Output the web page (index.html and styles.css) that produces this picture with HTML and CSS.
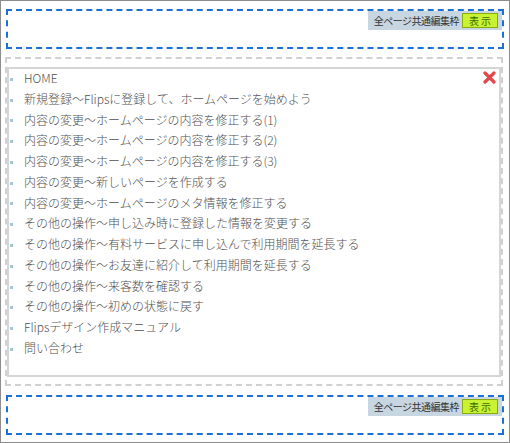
FILE: index.html
```html
<!DOCTYPE html>
<html lang="ja">
<head>
<meta charset="utf-8">
<title>Flips メニュー</title>
<link rel="stylesheet" href="styles.css">
</head>
<body>
<div class="page">
  <div class="common-frame">
    <div class="badge"><span class="badge-label">全ページ共通編集枠</span><span class="badge-btn">表示</span></div>
  </div>
  <div class="content-frame">
    <div class="menu-box">
      <span class="close-x" aria-label="閉じる">
        <svg width="13" height="13" viewBox="0 0 13 13"><path d="M2 2 L11 11 M11 2 L2 11" stroke="#e2474b" stroke-width="3.2" stroke-linecap="round"/></svg>
      </span>
      <ul class="menu">
        <li>HOME</li>
        <li>新規登録～Flipsに登録して、ホームページを始めよう</li>
        <li>内容の変更～ホームページの内容を修正する(1)</li>
        <li>内容の変更～ホームページの内容を修正する(2)</li>
        <li>内容の変更～ホームページの内容を修正する(3)</li>
        <li>内容の変更～新しいページを作成する</li>
        <li>内容の変更～ホームページのメタ情報を修正する</li>
        <li>その他の操作～申し込み時に登録した情報を変更する</li>
        <li>その他の操作～有料サービスに申し込んで利用期間を延長する</li>
        <li>その他の操作～お友達に紹介して利用期間を延長する</li>
        <li>その他の操作～来客数を確認する</li>
        <li>その他の操作～初めの状態に戻す</li>
        <li>Flipsデザイン作成マニュアル</li>
        <li>問い合わせ</li>
      </ul>
    </div>
  </div>
  <div class="common-frame bottom">
    <div class="badge"><span class="badge-label">全ページ共通編集枠</span><span class="badge-btn">表示</span></div>
  </div>
</div>
</body>
</html>
```

FILE: styles.css
```css
html, body {
  margin: 0;
  padding: 0;
  background: #ffffff;
}

.page {
  width: 510px;
  height: 443px;
  box-sizing: border-box;
  border: 1px solid #8d8d8d;
  padding: 8px 5px 0 5px;
  font-family: "Noto Sans CJK JP", "Noto Sans", sans-serif;
}

.common-frame {
  height: 40px;
  box-sizing: border-box;
  border: 2px dashed #1a6fd8;
  display: flex;
  justify-content: flex-end;
  align-items: flex-start;
}

.common-frame.bottom {
  margin-top: 9px;
}

.badge {
  display: flex;
  align-items: center;
  background: #c7d6e1;
  height: 19px;
  padding: 0 4px 0 6px;
  gap: 3px;
}

.badge-label {
  font-size: 10px;
  line-height: 19px;
  letter-spacing: -0.5px;
  color: #333333;
}

.badge-btn {
  display: block;
  width: 34px;
  height: 13px;
  border: 1px solid #86ad0c;
  background: #c8f232;
  color: #3d6b00;
  font-size: 10px;
  line-height: 13px;
  letter-spacing: 2px;
  text-indent: 2px;
  text-align: center;
}

.content-frame {
  margin-top: 8px;
  margin-left: -1px;
  margin-right: 1px;
  height: 329px;
  box-sizing: border-box;
  border: 2px dashed #d0d0d0;
  padding: 8px 0 7px 0;
}

.menu-box {
  position: relative;
  height: 310px;
  box-sizing: border-box;
  border: 2px solid #d5d5d5;
  background: #ffffff;
}

.close-x {
  position: absolute;
  top: 2px;
  right: 3px;
  width: 13px;
  height: 13px;
  display: block;
}

.close-x svg {
  display: block;
}

.menu {
  list-style: none;
  margin: -1px 0 0 0;
  padding: 0;
}

.menu li {
  display: flex;
  align-items: center;
  font-size: 12px;
  font-weight: 300;
  line-height: 20.77px;
  color: #505050;
  white-space: nowrap;
}

.menu li::before {
  content: "";
  display: block;
  flex: none;
  width: 3px;
  height: 3px;
  margin: 2px 11px 0 1px;
  background: #a6c6da;
}
```
